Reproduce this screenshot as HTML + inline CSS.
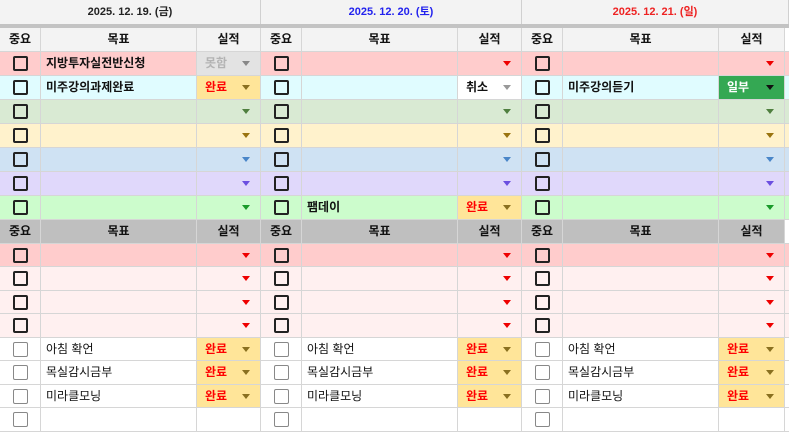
<!DOCTYPE html><html><head><meta charset="utf-8"><style>
*{box-sizing:border-box;margin:0;padding:0}
body{width:789px;height:414px;overflow:hidden;background:#fff;font-family:"Liberation Sans","Noto Sans CJK KR","NanumGothic",sans-serif;font-size:12px;color:#111;position:relative}
.day{position:absolute;top:0;height:414px}
.dh{height:24px;background:#f3f3f3;border-right:1px solid #d0d0d0;text-align:center;line-height:24px;font-size:11px;font-weight:bold}
.gl{height:4px;background:#c3c3c3}
.r{display:flex;height:24px;border-bottom:1px solid #d6d6d6}
.lo .r{height:23.5px}
.r>div{border-right:1px solid #d6d6d6;position:relative;height:100%}
.c{width:41px}.g{width:156px;padding-left:5px;line-height:22px;font-weight:bold;white-space:nowrap;overflow:hidden}.s{width:64px;padding-left:8px;line-height:22px;font-weight:bold}
.hd>div{text-align:center;line-height:23px;font-weight:bold;padding:0;background:#f3f3f3}
.hd2>div{text-align:center;line-height:23px;font-weight:bold;padding:0;background:#bfbfbf}
.cb{position:absolute;left:13px;top:4px;width:15px;height:15px;border:2px solid #222;border-radius:2px}
.cb.l{border:1.5px solid #888}
.a{position:absolute;right:10px;top:9px;width:0;height:0;border-left:4.5px solid transparent;border-right:4.5px solid transparent;border-top:5px solid #888}
.n{font-weight:normal}
.ok{background:#ffe599!important;color:#f00}
.d3 .s{width:66px}
</style></head><body>

<!-- DAY 1 -->
<div class="day" style="left:0;width:261px">
<div class="dh" style="color:#222">2025. 12. 19. (금)</div><div class="gl"></div>
<div class="r hd"><div class="c">중요</div><div class="g">목표</div><div class="s">실적</div></div>
<div class="r" style="background:#ffcccc"><div class="c"><i class="cb"></i></div><div class="g">지방투자실전반신청</div><div class="s" style="background:#e3e3e3;color:#b3b3b3">못함<i class="a" style="border-top-color:#888"></i></div></div>
<div class="r" style="background:#e0fcff"><div class="c"><i class="cb"></i></div><div class="g">미주강의과제완료</div><div class="s ok">완료<i class="a" style="border-top-color:#8a7020"></i></div></div>
<div class="r" style="background:#d9ead3"><div class="c"><i class="cb"></i></div><div class="g"></div><div class="s"><i class="a" style="border-top-color:#4f7f3f"></i></div></div>
<div class="r" style="background:#fff2cc"><div class="c"><i class="cb"></i></div><div class="g"></div><div class="s"><i class="a" style="border-top-color:#9a7410"></i></div></div>
<div class="r" style="background:#cfe2f3"><div class="c"><i class="cb"></i></div><div class="g"></div><div class="s"><i class="a" style="border-top-color:#4a86c8"></i></div></div>
<div class="r" style="background:#e0d8fb"><div class="c"><i class="cb"></i></div><div class="g"></div><div class="s"><i class="a" style="border-top-color:#6b4fe0"></i></div></div>
<div class="r" style="background:#ccfccc"><div class="c"><i class="cb"></i></div><div class="g"></div><div class="s"><i class="a" style="border-top-color:#1a9a2a"></i></div></div>
<div class="lo">
<div class="r hd2"><div class="c">중요</div><div class="g">목표</div><div class="s">실적</div></div>
<div class="r" style="background:#ffcccc"><div class="c"><i class="cb"></i></div><div class="g"></div><div class="s"><i class="a" style="border-top-color:#e00"></i></div></div>
<div class="r" style="background:#fff0f0"><div class="c"><i class="cb"></i></div><div class="g"></div><div class="s"><i class="a" style="border-top-color:#e00"></i></div></div>
<div class="r" style="background:#fff0f0"><div class="c"><i class="cb"></i></div><div class="g"></div><div class="s"><i class="a" style="border-top-color:#e00"></i></div></div>
<div class="r" style="background:#fff0f0"><div class="c"><i class="cb"></i></div><div class="g"></div><div class="s"><i class="a" style="border-top-color:#e00"></i></div></div>
<div class="r"><div class="c"><i class="cb l"></i></div><div class="g n">아침 확언</div><div class="s ok">완료<i class="a" style="border-top-color:#8a7020"></i></div></div>
<div class="r"><div class="c"><i class="cb l"></i></div><div class="g n">목실감시금부</div><div class="s ok">완료<i class="a" style="border-top-color:#8a7020"></i></div></div>
<div class="r"><div class="c"><i class="cb l"></i></div><div class="g n">미라클모닝</div><div class="s ok">완료<i class="a" style="border-top-color:#8a7020"></i></div></div>
<div class="r"><div class="c"><i class="cb l"></i></div><div class="g"></div><div class="s"></div></div>
</div></div>

<!-- DAY 2 -->
<div class="day" style="left:261px;width:261px">
<div class="dh" style="color:#2222ee">2025. 12. 20. (토)</div><div class="gl"></div>
<div class="r hd"><div class="c">중요</div><div class="g">목표</div><div class="s">실적</div></div>
<div class="r" style="background:#ffcccc"><div class="c"><i class="cb"></i></div><div class="g"></div><div class="s"><i class="a" style="border-top-color:#e00"></i></div></div>
<div class="r" style="background:#e0fcff"><div class="c"><i class="cb"></i></div><div class="g"></div><div class="s" style="background:#fff">취소<i class="a" style="border-top-color:#999"></i></div></div>
<div class="r" style="background:#d9ead3"><div class="c"><i class="cb"></i></div><div class="g"></div><div class="s"><i class="a" style="border-top-color:#4f7f3f"></i></div></div>
<div class="r" style="background:#fff2cc"><div class="c"><i class="cb"></i></div><div class="g"></div><div class="s"><i class="a" style="border-top-color:#9a7410"></i></div></div>
<div class="r" style="background:#cfe2f3"><div class="c"><i class="cb"></i></div><div class="g"></div><div class="s"><i class="a" style="border-top-color:#4a86c8"></i></div></div>
<div class="r" style="background:#e0d8fb"><div class="c"><i class="cb"></i></div><div class="g"></div><div class="s"><i class="a" style="border-top-color:#6b4fe0"></i></div></div>
<div class="r" style="background:#ccfccc"><div class="c"><i class="cb"></i></div><div class="g">팸데이</div><div class="s ok">완료<i class="a" style="border-top-color:#8a7020"></i></div></div>
<div class="lo">
<div class="r hd2"><div class="c">중요</div><div class="g">목표</div><div class="s">실적</div></div>
<div class="r" style="background:#ffcccc"><div class="c"><i class="cb"></i></div><div class="g"></div><div class="s"><i class="a" style="border-top-color:#e00"></i></div></div>
<div class="r" style="background:#fff0f0"><div class="c"><i class="cb"></i></div><div class="g"></div><div class="s"><i class="a" style="border-top-color:#e00"></i></div></div>
<div class="r" style="background:#fff0f0"><div class="c"><i class="cb"></i></div><div class="g"></div><div class="s"><i class="a" style="border-top-color:#e00"></i></div></div>
<div class="r" style="background:#fff0f0"><div class="c"><i class="cb"></i></div><div class="g"></div><div class="s"><i class="a" style="border-top-color:#e00"></i></div></div>
<div class="r"><div class="c"><i class="cb l"></i></div><div class="g n">아침 확언</div><div class="s ok">완료<i class="a" style="border-top-color:#8a7020"></i></div></div>
<div class="r"><div class="c"><i class="cb l"></i></div><div class="g n">목실감시금부</div><div class="s ok">완료<i class="a" style="border-top-color:#8a7020"></i></div></div>
<div class="r"><div class="c"><i class="cb l"></i></div><div class="g n">미라클모닝</div><div class="s ok">완료<i class="a" style="border-top-color:#8a7020"></i></div></div>
<div class="r"><div class="c"><i class="cb l"></i></div><div class="g"></div><div class="s"></div></div>
</div></div>

<!-- DAY 3 -->
<div class="day d3" style="left:522px;width:267px">
<div class="dh" style="color:#ee2222">2025. 12. 21. (일)</div><div class="gl"></div>
<div class="r hd"><div class="c">중요</div><div class="g">목표</div><div class="s">실적</div></div>
<div class="r" style="background:#ffcccc"><div class="c"><i class="cb"></i></div><div class="g"></div><div class="s"><i class="a" style="border-top-color:#e00"></i></div></div>
<div class="r" style="background:#e0fcff"><div class="c"><i class="cb"></i></div><div class="g">미주강의듣기</div><div class="s" style="background:#34a853;color:#fff">일부<i class="a" style="border-top-color:#111"></i></div></div>
<div class="r" style="background:#d9ead3"><div class="c"><i class="cb"></i></div><div class="g"></div><div class="s"><i class="a" style="border-top-color:#4f7f3f"></i></div></div>
<div class="r" style="background:#fff2cc"><div class="c"><i class="cb"></i></div><div class="g"></div><div class="s"><i class="a" style="border-top-color:#9a7410"></i></div></div>
<div class="r" style="background:#cfe2f3"><div class="c"><i class="cb"></i></div><div class="g"></div><div class="s"><i class="a" style="border-top-color:#4a86c8"></i></div></div>
<div class="r" style="background:#e0d8fb"><div class="c"><i class="cb"></i></div><div class="g"></div><div class="s"><i class="a" style="border-top-color:#6b4fe0"></i></div></div>
<div class="r" style="background:#ccfccc"><div class="c"><i class="cb"></i></div><div class="g"></div><div class="s"><i class="a" style="border-top-color:#1a9a2a"></i></div></div>
<div class="lo">
<div class="r hd2"><div class="c">중요</div><div class="g">목표</div><div class="s">실적</div></div>
<div class="r" style="background:#ffcccc"><div class="c"><i class="cb"></i></div><div class="g"></div><div class="s"><i class="a" style="border-top-color:#e00"></i></div></div>
<div class="r" style="background:#fff0f0"><div class="c"><i class="cb"></i></div><div class="g"></div><div class="s"><i class="a" style="border-top-color:#e00"></i></div></div>
<div class="r" style="background:#fff0f0"><div class="c"><i class="cb"></i></div><div class="g"></div><div class="s"><i class="a" style="border-top-color:#e00"></i></div></div>
<div class="r" style="background:#fff0f0"><div class="c"><i class="cb"></i></div><div class="g"></div><div class="s"><i class="a" style="border-top-color:#e00"></i></div></div>
<div class="r"><div class="c"><i class="cb l"></i></div><div class="g n">아침 확언</div><div class="s ok">완료<i class="a" style="border-top-color:#8a7020"></i></div></div>
<div class="r"><div class="c"><i class="cb l"></i></div><div class="g n">목실감시금부</div><div class="s ok">완료<i class="a" style="border-top-color:#8a7020"></i></div></div>
<div class="r"><div class="c"><i class="cb l"></i></div><div class="g n">미라클모닝</div><div class="s ok">완료<i class="a" style="border-top-color:#8a7020"></i></div></div>
<div class="r"><div class="c"><i class="cb l"></i></div><div class="g"></div><div class="s"></div></div>
</div></div>
</body></html>
